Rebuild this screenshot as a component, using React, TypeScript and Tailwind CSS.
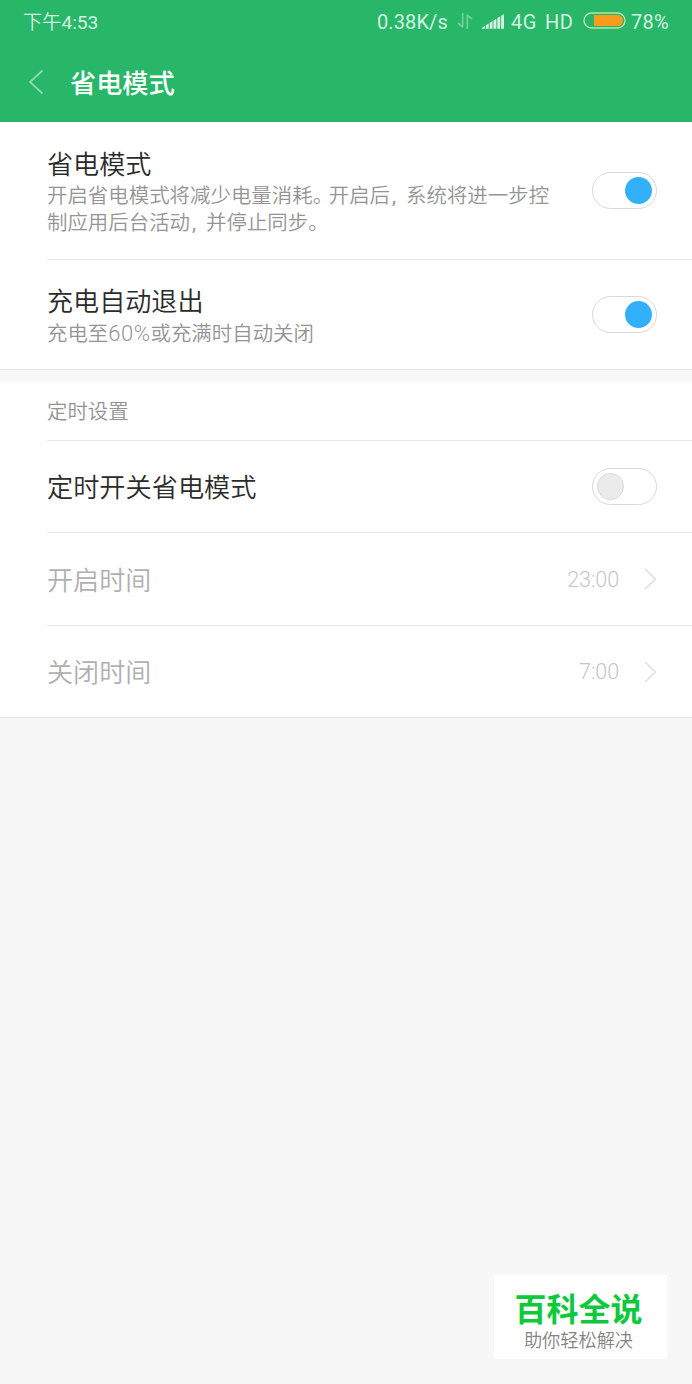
import type { ReactNode } from 'react'

function StatusBar() {
  return (
    <div className="flex h-[43px] items-center pl-[23px] pr-[23px] text-[20px] leading-none text-[#d4f1e1]">
      <span className="pt-[2px] text-[19.2px] font-[350]">下午<span className="font-normal">4:53</span></span>
      <div className="ml-auto flex items-center">
        <span className="w-[71px] whitespace-nowrap tracking-[0.1px]">0.38K/s</span>
        <svg className="mb-[1px] ml-[9px] h-[16px] w-[16px]" viewBox="0 0 16 16" fill="none" stroke="#6fcf9b" strokeWidth="1.8">
          <path d="M5.7 0v14.5M5.7 14L1 10M10.3 16V1.5M10.3 2L15 6" />
        </svg>
        <svg className="ml-[9px] h-[15px] w-[22px]" viewBox="0 0 23 15" fill="currentColor">
          <path d="M0 15v-1l3-2v3zM4 15v-3.5l3-2V15zM8 15V9l3-2v8zM12 15V6.5l3-2V15zM16 15V4l3-2v13zM20 15V1.5L23 0v15z" />
        </svg>
        <span className="ml-[7px] w-[27px] whitespace-nowrap tracking-[0.4px]">4G</span>
        <span className="ml-[7px] w-[30px] whitespace-nowrap tracking-[0.4px]">HD</span>
        <svg className="mb-[2px] ml-[8px] h-[17px] w-[43px]" viewBox="0 0 43 17" fill="none">
          <rect x="1" y="1" width="41" height="15" rx="7.5" stroke="#b9e5a5" strokeWidth="1.4" />
          <path d="M11 3h23.5a5.5 5.5 0 0 1 0 11H11z" fill="#fa9c1b" />
        </svg>
        <span className="ml-[5px] w-[38px] whitespace-nowrap tracking-[0.2px]">78%</span>
      </div>
    </div>
  )
}

function Toggle({ on }: { on?: boolean }) {
  return (
    <div className={`flex h-[37px] w-[65px] shrink-0 items-center rounded-full border border-[#d9d9d9] bg-white px-[4px] ${on ? 'justify-end' : ''}`}>
      <div className={`h-[27px] w-[27px] rounded-full ${on ? 'bg-[#33b0fb]' : 'border border-[#d9d9d9] bg-[#ebebeb]'}`} />
    </div>
  )
}

function Comma() {
  return <span className="ml-[2px] inline-block w-[14px] font-normal">,</span>
}

function Row({ className, children }: { className: string; children: ReactNode }) {
  return <div className={`ml-[47px] flex items-center justify-between pr-[35px] ${className}`}>{children}</div>
}

function TimeRow({ label, time, className }: { label: string; time: string; className: string }) {
  return (
    <Row className={className}>
      <span className="pt-[5px] text-[26.1px] font-[350] text-[#b0b0b0]">{label}</span>
      <div className="flex items-center">
        <span className="pt-[2px] text-[21.5px] font-[350] tracking-[-0.1px] text-[#c6c6c6]">{time}</span>
        <svg className="ml-[25px] h-[22px] w-[13px]" viewBox="0 0 13 22" fill="none" stroke="#dedede" strokeWidth="1.5">
          <path d="M1 1l10.5 10L1 21" />
        </svg>
      </div>
    </Row>
  )
}

export default function App() {
  return (
    <div className="flex h-[1384px] w-[692px] flex-col bg-[#f7f7f7] font-['Roboto','Noto_Sans_CJK_SC',sans-serif]">
      <header className="h-[122px] bg-[#28b768]">
        <StatusBar />
        <div className="flex h-[78px] items-center pl-[28px]">
          <svg className="h-[26px] w-[16px]" viewBox="0 0 16 26" fill="none" stroke="#8fd9b0" strokeWidth="1.8">
            <path d="M14.5 1.5L2 13l12.5 11.5" />
          </svg>
          <h1 className="ml-[26px] pt-[5px] text-[26.2px] font-medium text-white">省电模式</h1>
        </div>
      </header>

      <section className="border-b border-[#e4e4e4] bg-white">
        <Row className="h-[138px] border-b border-[#e6e6e6]">
          <div className="pt-[2px]">
            <h2 className="text-[26.1px] font-[350] leading-[36px] text-[#2b2b2b]">省电模式</h2>
            <p className="whitespace-nowrap text-[20.45px] font-[350] leading-[27px] text-[#949494]">
              开启省电模式将减少电量消耗<span className="tracking-[-4.4px]">。</span>开启后<Comma />系统将进一步控
              <br />
              制应用后台活动<Comma />并停止同步。
            </p>
          </div>
          <Toggle on />
        </Row>
        <Row className="h-[109px]">
          <div className="pt-[2px]">
            <h2 className="text-[26.1px] font-[350] leading-[36px] text-[#2b2b2b]">充电自动退出</h2>
            <p className="text-[20.45px] font-[350] leading-[27px] text-[#949494]">
              充电至<span className="text-[22px] tracking-[0.5px]">60%</span>或充满时自动关闭
            </p>
          </div>
          <Toggle on />
        </Row>
      </section>

      <section className="mt-[12px] border-b border-[#e4e4e4] bg-white">
        <Row className="h-[59px] border-b border-[#e6e6e6]">
          <span className="pt-[3px] text-[20.4px] font-[350] text-[#949494]">定时设置</span>
        </Row>
        <Row className="h-[92px] border-b border-[#e6e6e6]">
          <span className="pt-[5px] text-[26.2px] font-[350] text-[#2b2b2b]">定时开关省电模式</span>
          <Toggle />
        </Row>
        <TimeRow label="开启时间" time="23:00" className="h-[93px] border-b border-[#e6e6e6]" />
        <TimeRow label="关闭时间" time="7:00" className="h-[91px]" />
      </section>

      <div className="mb-[25px] ml-auto mr-[25px] mt-auto flex h-[84px] w-[173px] flex-col items-center bg-white pr-[4px] pt-[16px]">
        <span className="text-[32px] font-bold leading-[38px] text-[#0fc93c]">百科全说</span>
        <span className="text-[18.2px] font-[350] leading-[24px] text-[#848484]">助你轻松解决</span>
      </div>
    </div>
  )
}
